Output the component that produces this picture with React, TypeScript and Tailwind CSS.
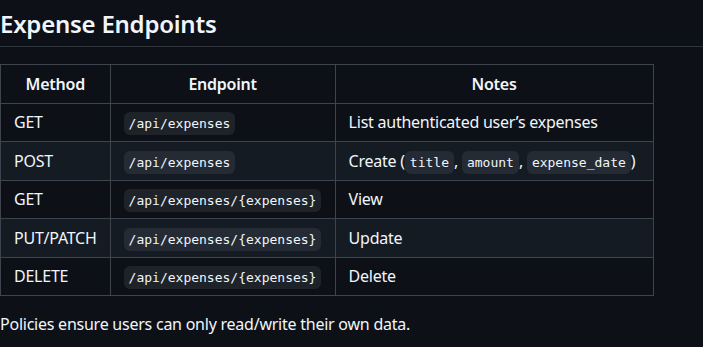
import React from 'react';

const ROWS = [
  { method: 'GET', endpoint: '/api/expenses', notes: 'list' },
  { method: 'POST', endpoint: '/api/expenses', notes: 'create' },
  { method: 'GET', endpoint: '/api/expenses/{expenses}', notes: 'View' },
  { method: 'PUT/PATCH', endpoint: '/api/expenses/{expenses}', notes: 'Update' },
  { method: 'DELETE', endpoint: '/api/expenses/{expenses}', notes: 'Delete' },
];

function Code({ children }: { children: React.ReactNode }) {
  return (
    <code className="rounded-md bg-[#656c7633] px-[5px] py-[4px] font-['DejaVu_Sans_Mono',monospace] text-[13px] leading-none tracking-normal">
      {children}
    </code>
  );
}

const cell = 'h-[38.5px] border border-[#3d444d] py-0 px-[13px] leading-6 align-middle';

export default function App() {
  return (
    <div className="min-h-screen bg-[#0d1117] text-[#f0f6fc] font-['Noto_Sans',sans-serif] text-[16px] leading-6 tracking-[-0.015em] overflow-hidden">
      <h2 className="pt-[9px] pb-[7px] text-[24px] leading-[30px] font-semibold border-b border-[#3d444db3]">
        Expense Endpoints
      </h2>
      <table className="mt-[17px] border-collapse">
        <thead>
          <tr>
            <th className={`w-[108px] font-semibold ${cell}`}>Method</th>
            <th className={`w-[225px] font-semibold ${cell}`}>Endpoint</th>
            <th className={`w-[318px] font-semibold ${cell}`}>Notes</th>
          </tr>
        </thead>
        <tbody>
          {ROWS.map((r, i) => (
            <tr key={i} className={i % 2 === 1 ? 'bg-[#151b23]' : ''}>
              <td className={cell}>{r.method}</td>
              <td className={cell}>
                <Code>{r.endpoint}</Code>
              </td>
              <td className={cell}>
                {r.notes === 'list' && "List authenticated user’s expenses"}
                {r.notes === 'create' && (
                  <>
                    Create (<Code>title</Code>, <Code>amount</Code>, <Code>expense_date</Code>)
                  </>
                )}
                {r.notes !== 'list' && r.notes !== 'create' && r.notes}
              </td>
            </tr>
          ))}
        </tbody>
      </table>
      <p className="mt-4">Policies ensure users can only read/write their own data.</p>
    </div>
  );
}
